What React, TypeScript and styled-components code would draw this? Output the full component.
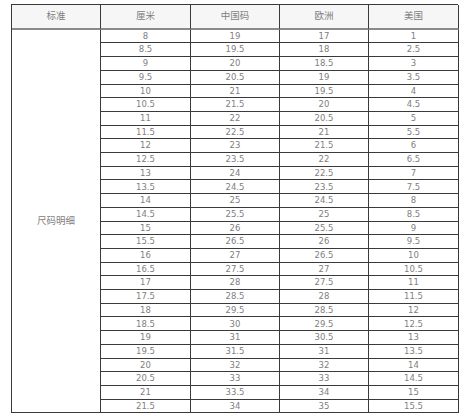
import React from "react";
import styled, { createGlobalStyle } from "styled-components";

const Global = createGlobalStyle`
  html, body { margin: 0; padding: 0; background: #fff; }
  body { font-family: "DejaVu Sans", "Noto Sans CJK SC", sans-serif; }
`;

const rows: [string, string, string, string][] = [
  ["8", "19", "17", "1"],
  ["8.5", "19.5", "18", "2.5"],
  ["9", "20", "18.5", "3"],
  ["9.5", "20.5", "19", "3.5"],
  ["10", "21", "19.5", "4"],
  ["10.5", "21.5", "20", "4.5"],
  ["11", "22", "20.5", "5"],
  ["11.5", "22.5", "21", "5.5"],
  ["12", "23", "21.5", "6"],
  ["12.5", "23.5", "22", "6.5"],
  ["13", "24", "22.5", "7"],
  ["13.5", "24.5", "23.5", "7.5"],
  ["14", "25", "24.5", "8"],
  ["14.5", "25.5", "25", "8.5"],
  ["15", "26", "25.5", "9"],
  ["15.5", "26.5", "26", "9.5"],
  ["16", "27", "26.5", "10"],
  ["16.5", "27.5", "27", "10.5"],
  ["17", "28", "27.5", "11"],
  ["17.5", "28.5", "28", "11.5"],
  ["18", "29.5", "28.5", "12"],
  ["18.5", "30", "29.5", "12.5"],
  ["19", "31", "30.5", "13"],
  ["19.5", "31.5", "31", "13.5"],
  ["20", "32", "32", "14"],
  ["20.5", "33", "33", "14.5"],
  ["21", "33.5", "34", "15"],
  ["21.5", "34", "35", "15.5"],
];

const headers = ["标准", "厘米", "中国码", "欧洲", "美国"];

const Page = styled.div`
  padding: 4px 0 0 11px;
`;

const Grid = styled.div`
  display: grid;
  grid-template-columns: 89px 90px 89px 89px 90px;
  grid-template-rows: 24.7px repeat(28, 13.714px);
  width: 447px;
  box-sizing: border-box;
  border-top: 1px solid #3a3a3a;
  border-left: 1px solid #3a3a3a;
`;

const HeadCell = styled.div`
  display: flex;
  align-items: center;
  justify-content: center;
  box-sizing: border-box;
  background: #f6f6f6;
  border-right: 1px solid #3a3a3a;
  border-bottom: 2px solid #8a8a8a;
  color: #808080;
  font-family: "Noto Sans CJK SC", sans-serif;
  font-size: 9.5px;
  line-height: 1;
  padding-bottom: 1px;
`;

const LabelCell = styled.div`
  grid-column: 1;
  grid-row: 2 / span 28;
  display: flex;
  align-items: center;
  justify-content: center;
  box-sizing: border-box;
  border-right: 1px solid #3a3a3a;
  border-bottom: 1px solid #3a3a3a;
  color: #808080;
  font-family: "Noto Sans CJK SC", sans-serif;
  font-size: 9.5px;
  line-height: 1;
`;

const DataCell = styled.div`
  display: flex;
  align-items: center;
  justify-content: center;
  box-sizing: border-box;
  border-right: 1px solid #3a3a3a;
  border-bottom: 1px solid #3a3a3a;
  color: #808080;
  font-family: "DejaVu Sans", sans-serif;
  font-size: 8.5px;
  line-height: 1;
`;

export default function App() {
  return (
    <>
      <Global />
      <Page>
        <Grid>
          {headers.map((h) => (
            <HeadCell key={h}>{h}</HeadCell>
          ))}
          <LabelCell>尺码明细</LabelCell>
          {rows.map((r, i) =>
            r.map((v, j) => <DataCell key={`${i}-${j}`}>{v}</DataCell>)
          )}
        </Grid>
      </Page>
    </>
  );
}
